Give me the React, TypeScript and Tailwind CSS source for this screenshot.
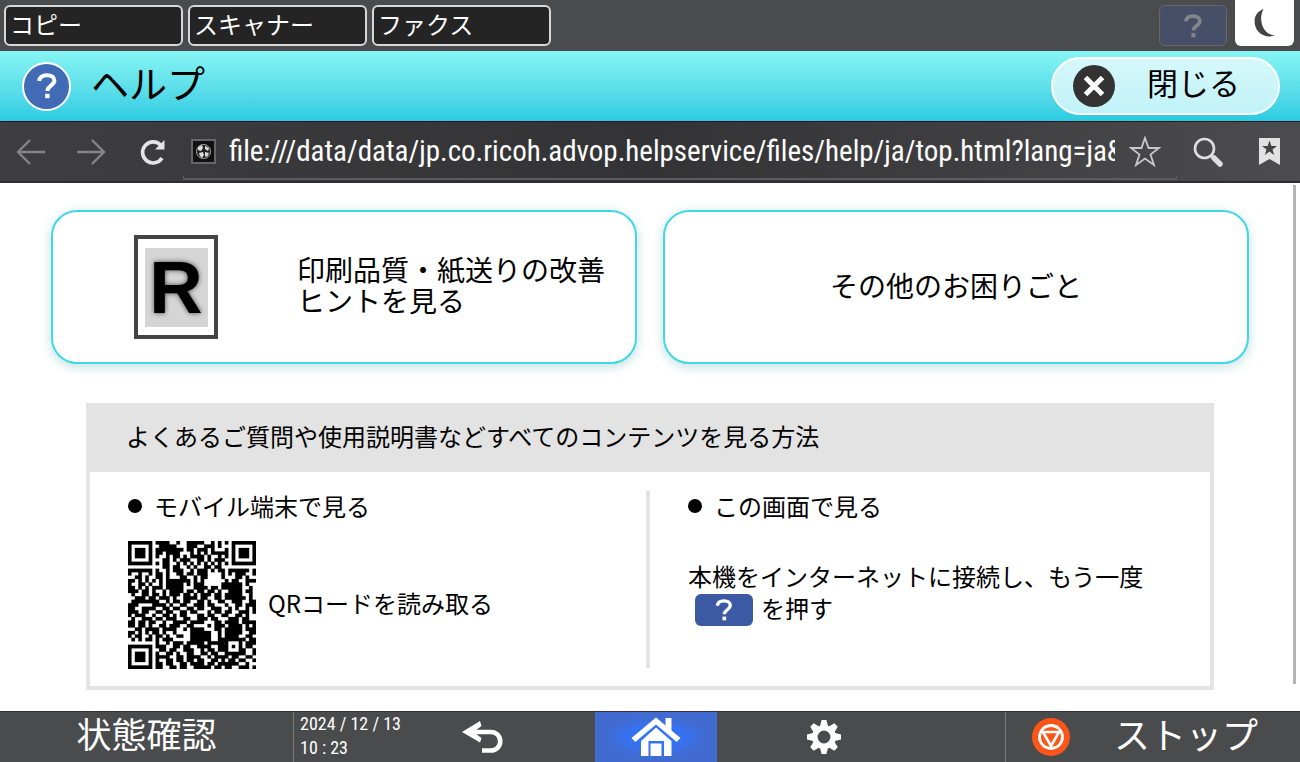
import React from "react";

const QR_SIZE = 37;

const QR_ROWS = [
  "#######.####..#..#####..#.#.#.#######",
  "#.....#..#####...###..###.#...#.....#",
  "#.###.#.########.##.###.#...#.#.###.#",
  "#.###.#.##.####...#.#.#.#####.#.###.#",
  "#.###.#.#..#.##.#.####.#..#.#.#.###.#",
  "#.....#...##.#.###..##.#.###..#.....#",
  "#######.#.##..#.#.#.#.#.#.#.#.#######",
  "..........##.##..#.#..##.##..........",
  "#######.#..#.###..#.###.#.##.######.#",
  "#..#..#.##.#..##.##.###....#.#.###..#",
  "..##.#..##.#...##..#.##....#...##.#..",
  "##.#.#.#.#.#######.#.#......#.##..###",
  "#..##.#..#.#####.#.###.....######.#..",
  "##.#.#.###.#####...####.##.######..#.",
  "###.##.#..#.####.##.##.##.#..####.##.",
  ".#..##.##.#.###.##.#.###.##.#####..#.",
  "..###.##.###.#..####.##..##.######.#.",
  ".########..#.##.##..##.#..##..###..##",
  "###....####.#..##..###.##...#..##.###",
  "##..####..##.##..##.##..###..#.#..#.#",
  "###.##..##.##..##.##...#.##.##..###.#",
  "#.###..#..##.#.##...##.##..##..##.#..",
  ".#..###.##.###..##..###.##...###.##..",
  "##.##.##..#..####.####...##.####.####",
  "##.##.#..##.###..##....#.###.####.#.#",
  "..##.####.####..#.####...##.#####.###",
  "##.#.#.##.#..#....######..#.#####..##",
  "#.##..#.##.#..##..######..#.####..##.",
  ".#.#.##.#.###.....######..######.#.##",
  "........#..#.###.#####.#####...##.###",
  "#######.###..##.##..####..###.#.#.##.",
  "#.....#..##.##..###..#.##.###...##..#",
  "#.###.#.#..##.#..##..##.##..######..#",
  "#.###.#.####..##.####..#.####.##..##.",
  "#.###.#.#..##.##.##.##..##.#.##.##..#",
  "#.....#.##.##..##.####.##.######..#..",
  "#######.##..##.##..#####.##.##..###.#",
];

function QrCode() {
  const cells: string[] = [];
  QR_ROWS.forEach((row, y) => {
    for (let x = 0; x < QR_SIZE; x++) {
      if (row[x] === "#") cells.push(`M${x} ${y}h1v1h-1z`);
    }
  });
  return (
    <svg
      className="size-32 shrink-0"
      viewBox={`0 0 ${QR_SIZE} ${QR_SIZE}`}
      shapeRendering="geometricPrecision"
      role="img"
      aria-label="QRコード"
    >
      <path d={cells.join("")} fill="#000" stroke="#000" strokeWidth="0.06" />
      <g>
        <rect x="28" y="28" width="5" height="5" fill="#000" />
        <rect x="29" y="29" width="3" height="3" fill="#fff" />
        <rect x="30" y="30" width="1" height="1" fill="#000" />
      </g>
    </svg>
  );
}

function QuestionGlyph({ className }: { className: string }) {
  return (
    <svg className={className} viewBox="0 0 20 26" fill="none" aria-hidden="true">
      <path
        d="M2.200 8C2.600 4.400 5.600 2.200 10 2.200c4.600 0 7.400 2.200 7.400 5.400 0 5-7 5.200-7 10.400"
        stroke="currentColor"
        strokeWidth="4"
      />
      <rect x="8.200" y="20.800" width="4.400" height="4.400" fill="currentColor" />
    </svg>
  );
}

function TabButton({ children }: { children: React.ReactNode }) {
  return (
    <button
      type="button"
      className="h-[41px] w-[179px] rounded-md border-2 border-[#d8d8d8] bg-[#242424] px-1 pb-1 text-left text-2xl leading-8 text-white"
    >
      {children}
    </button>
  );
}

function TopBar() {
  return (
    <header className="flex h-[51px] items-start justify-between bg-[#4a4b4d] pr-1.5 pl-1">
      <nav className="flex gap-[5px] pt-[5px]">
        <TabButton>コピー</TabButton>
        <TabButton>スキャナー</TabButton>
        <TabButton>ファクス</TabButton>
      </nav>
      <div className="flex items-start gap-2">
        <button
          type="button"
          aria-label="ヘルプ"
          className="mt-[5px] flex h-[41px] w-[68px] items-center justify-center rounded-md border border-[#66686e] bg-[#474f68] text-[#85868a]"
        >
          <QuestionGlyph className="h-6 w-5" />
        </button>
        <button
          type="button"
          aria-label="省エネ"
          className="flex h-[46px] w-[59px] items-center justify-center rounded-b-md bg-white text-[#444]"
        >
          <svg className="size-7" viewBox="0 0 28 28" aria-hidden="true">
            <path d="M12.500 0C5 3 2.500 9 4 16c2 8.500 10 13.500 20 10.500-6.500-.5-11-4.500-13-11C9.500 10 10 4.500 12.500 0z" fill="currentColor" />
          </svg>
        </button>
      </div>
    </header>
  );
}

function TitleBar() {
  return (
    <div className="flex h-[70px] items-center justify-between bg-linear-to-b from-[#86f5f3] to-[#29cbe2] pr-5 pl-[22px]">
      <div className="flex items-center gap-5">
        <span className="flex size-[49px] items-center justify-center rounded-full border-2 border-white bg-[#416bb5] text-white">
          <QuestionGlyph className="h-[26px] w-5" />
        </span>
        <h1 className="pb-2 text-[38px] leading-[50px] text-black">ヘルプ</h1>
      </div>
      <button
        type="button"
        className="flex h-[58px] w-[229px] items-center gap-8 rounded-full border-2 border-white bg-linear-to-b from-[#d6f8fa] to-[#c0f2f8] pl-5 text-[31px] text-black"
      >
        <svg className="size-[42px]" viewBox="0 0 42 42" aria-hidden="true">
          <circle cx="21" cy="21" r="21" fill="#333" />
          <path d="M12.500 12.500l17 17M29.500 12.500l-17 17" stroke="#fff" strokeWidth="5" />
        </svg>
        <span className="pb-2 leading-10">閉じる</span>
      </button>
    </div>
  );
}

function BrowserBar() {
  return (
    <div className="flex h-[62px] items-center border-t border-b-2 border-t-[#151525] border-b-[#2e2e30] bg-linear-to-r from-[#3e3e40] via-[#333335] to-[#4c4c4e] pr-5 pl-4">
      <button type="button" aria-label="戻る" className="text-[#858587]">
        <svg className="h-7 w-[30px]" viewBox="0 0 30 28" fill="none" stroke="currentColor" strokeWidth="2.400" aria-hidden="true">
          <path d="M29 14H3M14 2L2 14l12 12" />
        </svg>
      </button>
      <button type="button" aria-label="進む" className="ml-[30px] text-[#858587]">
        <svg className="h-7 w-[30px]" viewBox="0 0 30 28" fill="none" stroke="currentColor" strokeWidth="2.400" aria-hidden="true">
          <path d="M1 14h26M16 2l12 12-12 12" />
        </svg>
      </button>
      <button type="button" aria-label="再読み込み" className="ml-[33px] text-[#e4e4e4]">
        <svg className="h-7 w-[27px]" viewBox="0 0 27 28" fill="none" aria-hidden="true">
          <path d="M22 7.500A10.500 10.500 0 1 0 23 20" stroke="currentColor" strokeWidth="3.600" />
          <path d="M25.500 2v9.500H16z" fill="currentColor" />
        </svg>
      </button>
      <div className="ml-[17px] flex h-full min-w-0 flex-1 flex-col">
        <div className="flex h-[54px] items-center pt-1 pl-2">
          <svg className="size-[25px] shrink-0" viewBox="0 0 25 25" aria-hidden="true">
            <rect x="1" y="1" width="23" height="23" fill="#111" stroke="#666" strokeWidth="2" />
            <circle cx="12.500" cy="12.500" r="7" fill="#222" stroke="#aaa" strokeWidth="1" />
            <path d="M7 8l4-2 1 3-2 3-3-1zM14 7l4 2-1 3-3-2zM8 14l4-1 1 3-2 3-2-2zM14 13l4 1-2 4-2-1z" fill="#ddd" />
          </svg>
          <input
            type="text"
            aria-label="アドレス"
            readOnly
            value="file:///data/data/jp.co.ricoh.advop.helpservice/files/help/ja/top.html?lang=ja&mode=top"
            className="ml-[13px] h-11 min-w-0 flex-1 bg-transparent font-['Roboto_Condensed','Noto_Sans_CJK_JP',sans-serif] text-[29px] text-white outline-none"
          />
          <button type="button" aria-label="お気に入りに追加" className="ml-[14px] text-[#c8c8c8]">
            <svg className="size-8" viewBox="0 0 32 32" fill="none" stroke="currentColor" strokeWidth="1.800" aria-hidden="true">
              <path d="M16 3l3.500 10H30l-8.500 6.500L25 30l-9-6.500L7 30l3.500-10.500L2 13h10.500z" />
            </svg>
          </button>
          <div className="w-4 shrink-0" />
        </div>
        <div className="h-1 border-x border-b-2 border-[#5c5c5e]" />
      </div>
      <button type="button" aria-label="検索" className="ml-4 text-[#dedede]">
        <svg className="size-[30px]" viewBox="0 0 30 30" fill="none" stroke="currentColor" aria-hidden="true">
          <circle cx="11.500" cy="11.500" r="9.500" strokeWidth="2.600" />
          <path d="M18 18l3 3" strokeWidth="3" />
          <path d="M21 21l6 6" strokeWidth="5.500" strokeLinecap="round" />
        </svg>
      </button>
      <button type="button" aria-label="ブックマーク" className="ml-9">
        <svg className="h-[27px] w-[21px]" viewBox="0 0 21 27" aria-hidden="true">
          <path d="M0 0h21v27l-10.500-6L0 27z" fill="#e2e2e2" />
          <path d="M10.500 2.500l1.900 5.400h5.600l-4.500 3.500 1.700 5.600-4.700-3.400L5.800 17l1.700-5.600L3 7.900h5.600z" fill="#444" />
        </svg>
      </button>
    </div>
  );
}

function HintCard({ children }: { children: React.ReactNode }) {
  return (
    <button
      type="button"
      className="flex h-[154px] min-w-0 flex-1 items-center rounded-[26px] border-2 border-[#40d8e6] bg-white text-left text-[28px] leading-[31px] text-black shadow-[0_3px_8px_2px_rgba(60,150,150,0.22)]"
    >
      {children}
    </button>
  );
}

function SampleSheet() {
  return (
    <span className="flex h-[104px] w-[84px] shrink-0 items-center justify-center border-4 border-[#444] bg-white">
      <span className="flex h-[79px] w-[63px] items-center justify-center bg-[#d5d5d5] pt-0.5 font-['Liberation_Sans',sans-serif] text-[74px] leading-none font-bold text-black [text-shadow:0_0_5px_#444]">
        R
      </span>
    </span>
  );
}

function Content() {
  return (
    <main className="relative flex-1 bg-white pt-[27px] pb-5">
      <div className="flex gap-[26px] px-[51px]">
        <HintCard>
          <span className="flex items-center gap-[79px] pl-[81px]">
            <SampleSheet />
            <span className="pb-1 whitespace-nowrap">
              印刷品質・紙送りの改善
              <br />
              ヒントを見る
            </span>
          </span>
        </HintCard>
        <HintCard>
          <span className="w-full pb-1 text-center">その他のお困りごと</span>
        </HintCard>
      </div>
      <section className="mx-[86px] mt-[39px] border-4 border-t-0 border-[#e3e3e3] text-2xl text-black">
        <h2 className="flex h-[69px] items-center bg-[#e3e3e3] pb-1 pl-9">
          よくあるご質問や使用説明書などすべてのコンテンツを見る方法
        </h2>
        <div className="flex h-[214px] pt-[19px] pr-1 pb-[18px] pl-[38px]">
          <div className="flex flex-1 flex-col border-r-4 border-[#e3e3e3]">
            <h3 className="flex items-center gap-3 leading-[30px]">
              <span className="size-3.5 rounded-full bg-black" />
              モバイル端末で見る
            </h3>
            <div className="mt-5 flex items-center gap-3">
              <QrCode />
              <p className="pb-1">QRコードを読み取る</p>
            </div>
          </div>
          <div className="flex flex-1 flex-col pl-[38px]">
            <h3 className="flex items-center gap-3 leading-[30px]">
              <span className="size-3.5 rounded-full bg-black" />
              この画面で見る
            </h3>
            <p className="mt-[39px] leading-8 whitespace-nowrap">本機をインターネットに接続し、もう一度</p>
            <p className="flex items-center gap-2 pl-[7px] leading-8">
              <span className="flex h-8 w-[58px] items-center justify-center rounded-md bg-[#3b5aa3] text-white">
                <QuestionGlyph className="h-[22px] w-[18px]" />
              </span>
              <span className="pb-1">を押す</span>
            </p>
          </div>
        </div>
      </section>
      <div className="absolute top-0.5 right-1 h-[499px] w-[3px] bg-[#b4b4b4]" />
    </main>
  );
}

function BottomBar() {
  return (
    <footer className="flex h-[51px] border-t border-[#333] bg-[#4a4b4d] text-white">
      <button type="button" className="w-[293px] pb-2 text-[35px] leading-[42px]">
        状態確認
      </button>
      <div className="flex w-[110px] shrink-0 flex-col justify-center border-l border-[#77787a] pb-0.5 pl-1.5 font-['Roboto_Condensed','Noto_Sans_CJK_JP',sans-serif] text-lg leading-6 whitespace-nowrap">
        <span>2024 / 12 / 13</span>
        <span>10 : 23</span>
      </div>
      <div className="flex flex-1">
        <button type="button" aria-label="戻る" className="flex flex-[2] items-center justify-center">
          <svg className="mr-8 h-8 w-[42px]" viewBox="0 0 42 32" fill="none" aria-hidden="true">
            <path d="M7 11h22a9 9 0 0 1 0 18.500h-9" stroke="#fff" strokeWidth="4.600" />
            <path d="M18 0l1.500 5-8 6 8 6-1.500 4.500L0 11z" fill="#fff" />
          </svg>
        </button>
        <button
          type="button"
          aria-label="ホーム"
          className="flex w-[122px] items-center justify-center bg-radial from-[#2f73ff] from-20% to-[#416bd0] to-60%"
        >
          <svg className="h-10 w-[50px]" viewBox="0 0 50 40" aria-hidden="true">
            <path d="M34.500 1h6v14l-6-6z" fill="#fff" />
            <path d="M25 .5L49.500 21l-3.800 4L25 7.500 4.300 25 .5 21z" fill="#fff" />
            <path d="M25 10.500L40.500 24v15H33V24H17.500v15H10V24zM19.500 26.500h11V39h-11z" fill="#fff" />
          </svg>
        </button>
        <button type="button" aria-label="設定" className="flex flex-[3] items-center justify-center">
          <svg className="mr-[74px] size-9" viewBox="-18 -18 36 36" aria-hidden="true">
            <g fill="#fff">
              {[0, 45, 90, 135, 180, 225, 270, 315].map((a) => (
                <path key={a} d="M-4.200-10L-2.400-17h4.800L4.200-10z" transform={`rotate(${a})`} />
              ))}
            </g>
            <circle r="9.200" fill="none" stroke="#fff" strokeWidth="5.500" />
          </svg>
        </button>
      </div>
      <button
        type="button"
        className="flex w-[295px] items-center gap-11 border-l border-[#77787a] pl-[26px] text-4xl leading-[42px]"
      >
        <svg className="size-[38px]" viewBox="0 0 38 38" fill="none" aria-hidden="true">
          <circle cx="19" cy="19" r="19" fill="#fc5518" />
          <circle cx="19" cy="19" r="11.500" stroke="#fff" strokeWidth="2.800" />
          <path d="M11 14h16l-8 14z" stroke="#fff" strokeWidth="2.600" strokeLinejoin="round" />
        </svg>
        <span className="pb-2">ストップ</span>
      </button>
    </footer>
  );
}

export default function App() {
  return (
    <div className="flex min-h-screen flex-col bg-white font-['Noto_Sans_CJK_JP',sans-serif]">
      <TopBar />
      <TitleBar />
      <BrowserBar />
      <Content />
      <BottomBar />
    </div>
  );
}
